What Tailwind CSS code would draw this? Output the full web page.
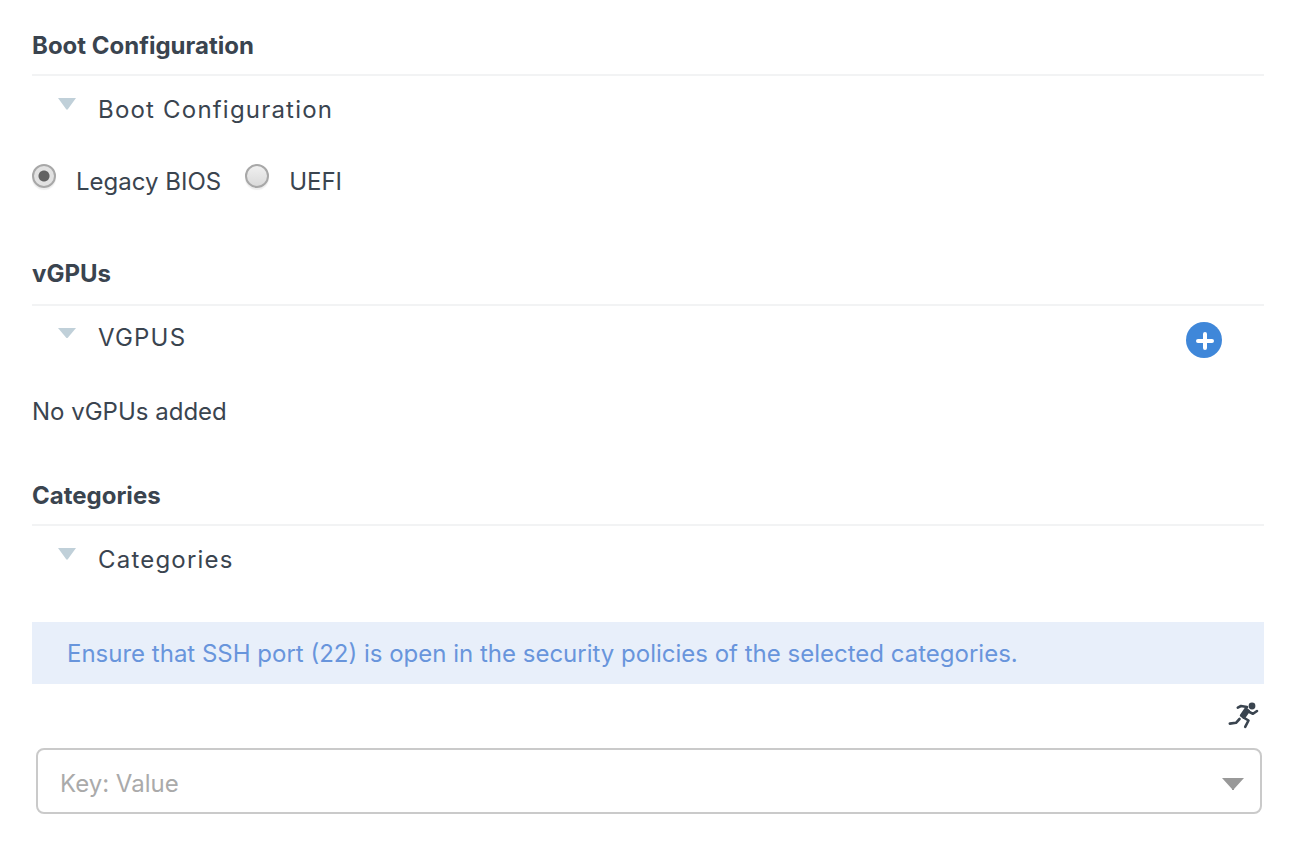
<!DOCTYPE html>
<html lang="en">
<head>
<meta charset="utf-8">
<meta name="viewport" content="width=device-width, initial-scale=1">
<title>VM Configuration</title>
<script src="https://cdn.jsdelivr.net/npm/@tailwindcss/browser@4"></script>
</head>
<body class="bg-white font-[Inter,sans-serif] text-[24px] leading-9 text-[#3a444f]">
<main class="pt-7 pr-12 pb-12 pl-8">
  <section>
    <h2 class="border-b-2 border-[#f2f3f4] pb-2.5 font-bold">Boot Configuration</h2>
    <button type="button" aria-expanded="true" class="mt-4 flex items-start pl-[26px] tracking-wider">
      <svg class="mt-1.5 mr-[22px] h-3 w-[18px]" viewBox="0 0 18 12" fill="#c0d0d9" aria-hidden="true"><path d="M0 0H18L10 11Q9 12.500 8 11Z"/></svg>
      Boot Configuration
    </button>
    <div class="mt-9 flex" role="radiogroup" aria-label="Boot mode">
      <input id="legacy" type="radio" name="boot" checked class="size-6 appearance-none rounded-full border-2 border-[#a8a8a8] bg-linear-to-b from-[#f0f0f0] to-[#dadada] shadow-[0_2px_1px_#eeeeee] checked:bg-[radial-gradient(circle,#636363_5px,#e2e2e2_6px)]">
      <label for="legacy" class="ml-5">Legacy BIOS</label>
      <input id="uefi" type="radio" name="boot" class="ml-6 size-6 appearance-none rounded-full border-2 border-[#a8a8a8] bg-linear-to-b from-[#f0f0f0] to-[#dadada] shadow-[0_2px_1px_#eeeeee] checked:bg-[radial-gradient(circle,#636363_5px,#e2e2e2_6px)]">
      <label for="uefi" class="ml-5">UEFI</label>
    </div>
  </section>

  <section class="mt-14">
    <h2 class="border-b-2 border-[#f2f3f4] pb-3 font-bold">vGPUs</h2>
    <div class="mt-3.5 flex items-start justify-between pr-[42px]">
      <button type="button" aria-expanded="true" class="flex items-start pl-[26px] tracking-wider">
        <svg class="mt-2 mr-[22px] h-2.5 w-[18px]" viewBox="0 0 18 10" fill="#c0d0d9" aria-hidden="true"><path d="M0 0H18L10 9.500Q9 10.500 8 9.500Z"/></svg>
        VGPUS
      </button>
      <button type="button" aria-label="Add vGPU" class="mt-0.5">
        <svg class="size-9" viewBox="0 0 36 36" aria-hidden="true"><circle cx="18" cy="18" r="18" fill="#3f87d9"/><path d="M19 12V26M12 19H26" stroke="#fff" stroke-width="4" stroke-linecap="round"/></svg>
      </button>
    </div>
    <p class="mt-9">No vGPUs added</p>
  </section>

  <section class="mt-12">
    <h2 class="border-b-2 border-[#f2f3f4] pb-2.5 font-bold">Categories</h2>
    <button type="button" aria-expanded="true" class="mt-4 flex items-start pl-[26px] tracking-wider">
      <svg class="mt-1.5 mr-[22px] h-3 w-[18px]" viewBox="0 0 18 12" fill="#c0d0d9" aria-hidden="true"><path d="M0 0H18L10 11Q9 12.500 8 11Z"/></svg>
      Categories
    </button>
    <p class="mt-11 bg-[#e8effa] pt-3.5 pr-4 pb-3 pl-[35px] text-[#6895dc]">Ensure that SSH port (22) is open in the security policies of the selected categories.</p>
    <div class="mt-4 flex justify-end pr-1">
      <button type="button" aria-label="Set as runtime variable">
        <svg class="size-8" viewBox="0 0 32 32" fill="none" stroke="#3a444f" stroke-linecap="round" stroke-linejoin="round" aria-hidden="true"><circle cx="24" cy="6" r="3.400" fill="#3a444f" stroke="none"/><path d="M9.800 7.600L13 6L19 7M20.500 11.500L25 13.800L29 11M1.800 23.600L8 22.800L11.500 19M15.500 17.500L20.500 20.500L17.200 26.800" stroke-width="2.600"/><path d="M17.800 8.500L13 15.500L16 17.800L20.800 11Z" fill="#3a444f" stroke-width="2.400"/></svg>
      </button>
    </div>
    <div class="relative mt-4 mr-0.5 ml-1">
      <select aria-label="Category" class="h-[66px] w-full appearance-none rounded-lg border-2 border-[#cacaca] bg-white pt-1.5 pr-16 pl-[22px] text-[#aaaaaa]">
        <option>Key: Value</option>
      </select>
      <svg class="pointer-events-none absolute top-[30px] right-[18px] h-3 w-[22px]" viewBox="0 0 22 12" fill="#999" aria-hidden="true"><path d="M0 0H22L12 11V12H10V11Z"/></svg>
    </div>
  </section>
</main>
</body>
</html>
